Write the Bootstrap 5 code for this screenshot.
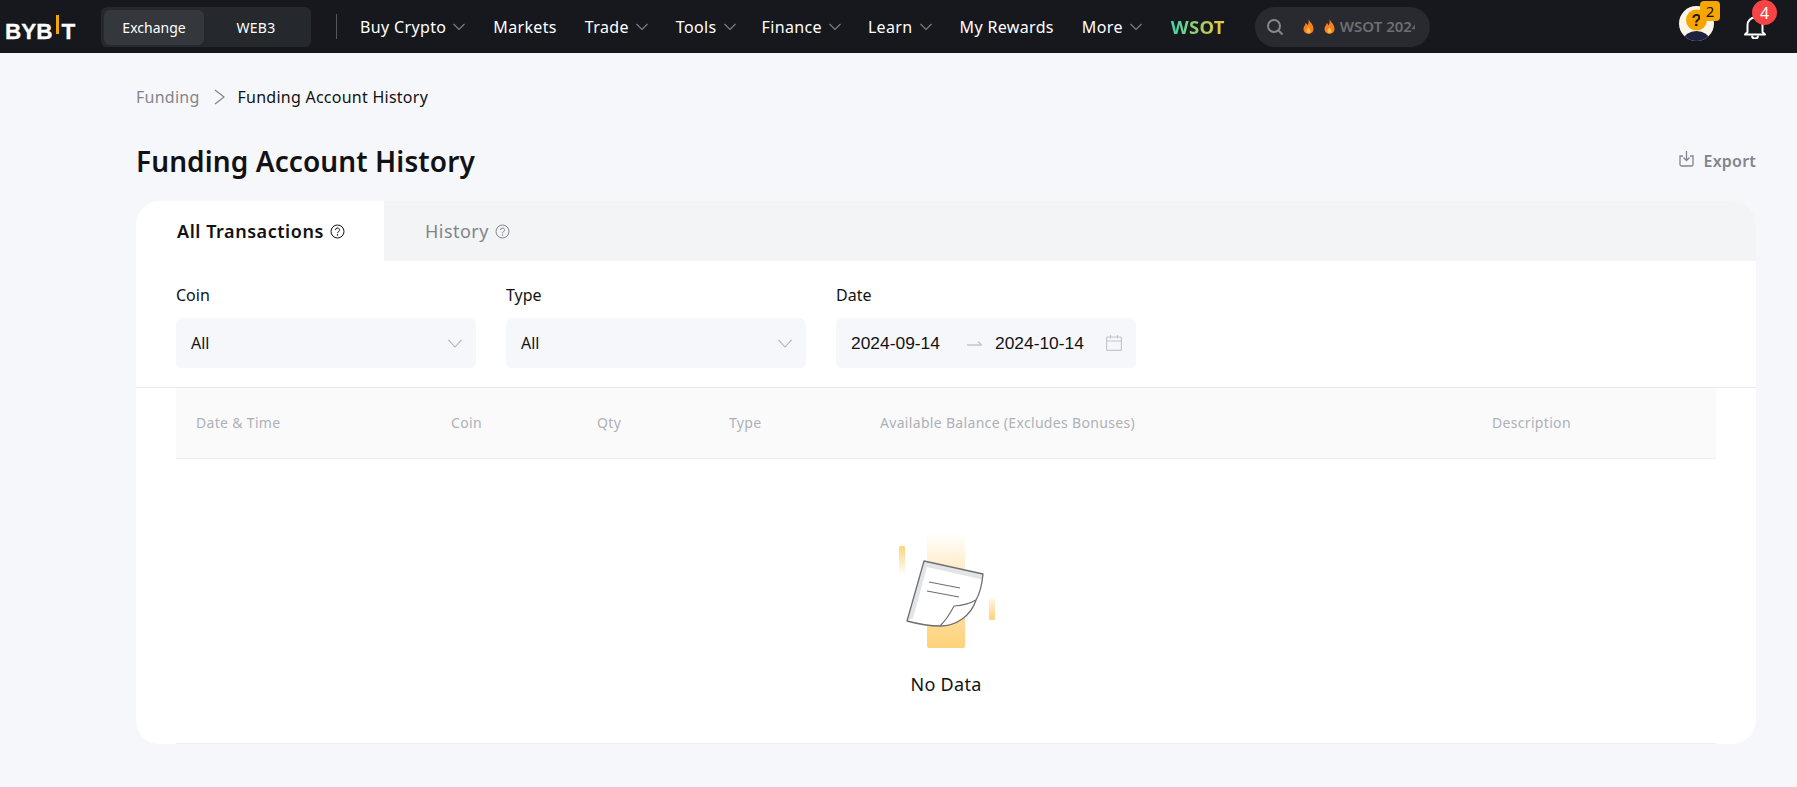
<!doctype html>
<html lang="en">
<head>
<meta charset="utf-8">
<title>Funding Account History</title>
<link href="https://cdn.jsdelivr.net/npm/bootstrap@5.3.0/dist/css/bootstrap.min.css" rel="stylesheet">
<style>
html,body{height:100%}
body{background:#f6f7fb;color:#121214;font-family:"Noto Sans",Roboto,sans-serif;overflow:hidden}
.topbar{height:53px;background:#16181e;color:#fff;padding:0 20px 0 5px}
.logo-txt{font-family:"Liberation Sans",sans-serif;font-weight:700;font-size:22.5px;width:72px;flex:none;line-height:24px;margin-top:6px;white-space:nowrap;-webkit-text-stroke:.3px #fff}
.logo-i{display:inline-block;width:3px;height:19px;background:#f7a600;margin:0 3px 5px 3px}
.switcher{width:210px;height:40px;margin-left:24px;background:#25282c;border-radius:6px;padding:3px;font-size:14px;flex:none}
.switcher>div{width:100px;height:35px;text-align:center;line-height:35px;border-radius:6px}
.switcher>.sw-on{background:#34373b}
.switcher>.sw-off{width:104px;letter-spacing:.3px}
.vline{width:1px;height:25px;background:#54565a;margin:0 23px 0 25px;flex:none}
.nav-it{font-size:16px;letter-spacing:.35px;color:#fff;margin-right:28px;white-space:nowrap;text-decoration:none;display:flex;align-items:center}
.nav-it.nav-tight{margin-right:26px}
.nav-it.nav-tight2{margin-right:27px}
.nav-it svg{margin-left:7px}
.wsot{font-weight:700;font-size:18.500px;background:linear-gradient(90deg,#3fd6a9,#f7c531);-webkit-background-clip:text;background-clip:text;color:transparent;margin-left:1px;letter-spacing:.3px}
.searchbox{width:175px;height:40px;border-radius:20px;background:#292a2f;margin-left:30px;padding-left:11px;flex:none;font-size:15px;font-weight:600;color:#6c6e72;overflow:hidden;white-space:nowrap}
.flame-a{margin-left:18px}.flame-b{margin-left:8px}
.search-words{width:75px;overflow:hidden;margin-left:4px}
.avatar-wrap{width:41px;height:35px;margin-left:auto;position:relative;flex:none;margin-bottom:6px}
.pip{position:absolute;display:flex;align-items:center;justify-content:center;font-size:15px;line-height:1}
.pip-orange{left:21px;top:-5px;width:20px;height:20px;background:#f7a600;color:#121214;border-radius:4px}
.bell-wrap{width:34px;height:24px;position:relative;flex:none;margin:0 0 3px 23px}
.pip-red{left:9px;top:-13px;width:25px;height:25px;background:#f84444;color:#fff;border-radius:50%;font-size:16px}
.main-area{padding:0 41px 0 136px}
.crumbs{height:36px;margin-top:26px;font-size:16px;letter-spacing:.25px;color:#81858c}
.crumbs .here{color:#121214}
.crumbs svg{margin:0 13px 0 14px}
.head-row{margin-top:19px;height:56px}
.page-title{font-size:28px;font-weight:600;margin:0;line-height:1.2;letter-spacing:.1px;color:#121214}
.export{font-size:16px;font-weight:600;letter-spacing:.2px;color:#81858c;margin-top:-2px}
.export svg{margin:-5px 10px 0 0}
.panel{margin-top:11px;height:543px;background:#fff;border-radius:24px;overflow:hidden}
.tabbar{height:60px;background:#f3f4f6}
.tab-on{width:248px;background:#fff;padding-left:41px;font-weight:600;font-size:18px;letter-spacing:.55px;color:#121214}
.tab-off{padding-left:41px;font-size:18px;letter-spacing:.45px;color:#81858c}
.tab-on svg,.tab-off svg{margin-left:6px}
.filters{padding:22px 40px 0 40px;gap:30px;height:127px;border-bottom:1px solid #e9eaee}
.fgroup{width:300px}
.flabel{font-size:16px;line-height:24px;margin-bottom:11px;color:#121214}
.fbox{height:50px;background:#f6f7fb;border-radius:6px;padding:0 14px 0 15px;font-size:16px}
.dates{font-family:"Liberation Sans",sans-serif;font-size:17.4px}
.date-arrow{margin:0 13px 0 27px}
.date-cal{margin-left:auto}
.tbl-wrap{padding:0 40px}
.grid-tbl{width:100%;table-layout:fixed;border-collapse:collapse}
.grid-tbl th{height:70px;background:#fafafa;font-size:14px;font-weight:400;letter-spacing:.32px;color:#adb1b8;border-bottom:1px solid #eeeff2;padding:0 0 0 20px;white-space:nowrap}
.grid-tbl .c1{width:255px}.grid-tbl .c2{width:146px}.grid-tbl .c3{width:132px}.grid-tbl .c4{width:151px}.grid-tbl .c5{width:612px}
.empty-cell{height:285px;border-bottom:1px solid #eeeff2;padding-top:28px;text-align:center}
.empty-txt{font-size:18px;letter-spacing:.3px;color:#121214;margin-top:24px;line-height:24px}
.empty-art{width:120px;height:116px;display:block;margin:0 auto}
</style>
</head>
<body>
<header class="topbar d-flex align-items-center">
  <div class="logo-txt">BYB<span class="logo-i"></span>T</div>
  <div class="switcher d-flex"><div class="sw-on">Exchange</div><div class="sw-off">WEB3</div></div>
  <div class="vline"></div>
  <a class="nav-it" href="#">Buy Crypto<svg width="12" height="8" viewBox="0 0 12 8" fill="none" stroke="#7d8085" stroke-width="1.1"><path d="M.5 1 6 6.500 11.500 1"/></svg></a>
  <a class="nav-it" href="#">Markets</a>
  <a class="nav-it" href="#">Trade<svg width="12" height="8" viewBox="0 0 12 8" fill="none" stroke="#7d8085" stroke-width="1.1"><path d="M.5 1 6 6.500 11.500 1"/></svg></a>
  <a class="nav-it nav-tight" href="#">Tools<svg width="12" height="8" viewBox="0 0 12 8" fill="none" stroke="#7d8085" stroke-width="1.1"><path d="M.5 1 6 6.500 11.500 1"/></svg></a>
  <a class="nav-it nav-tight2" href="#">Finance<svg width="12" height="8" viewBox="0 0 12 8" fill="none" stroke="#7d8085" stroke-width="1.1"><path d="M.5 1 6 6.500 11.500 1"/></svg></a>
  <a class="nav-it" href="#">Learn<svg width="12" height="8" viewBox="0 0 12 8" fill="none" stroke="#7d8085" stroke-width="1.1"><path d="M.5 1 6 6.500 11.500 1"/></svg></a>
  <a class="nav-it" href="#">My Rewards</a>
  <a class="nav-it" href="#">More<svg width="12" height="8" viewBox="0 0 12 8" fill="none" stroke="#7d8085" stroke-width="1.1"><path d="M.5 1 6 6.500 11.500 1"/></svg></a>
  <span class="wsot">WSOT</span>
  <div class="searchbox d-flex align-items-center">
    <svg width="18" height="18" viewBox="0 0 18 18" fill="none" stroke="#85878b" stroke-width="2"><circle cx="8" cy="8" r="6"/><path d="m12.500 12.500 4 4"/></svg>
    <svg class="flame-a" width="13" height="16" viewBox="0 0 12 16"><path d="M6 0c1 3 5 5 5 10a5 5 0 0 1-10 0C1 7 3 7 3 4c1 .5 2 1.500 2 2.500C6 5 6.500 2.500 6 0z" fill="#f7801e"/><path d="M6 8c.5 1.500 2 2.500 2 4a2 2 0 0 1-4 0c0-1.500 1.500-2.500 2-4z" fill="#fbc04a"/></svg>
    <svg class="flame-b" width="13" height="16" viewBox="0 0 12 16"><path d="M6 0c1 3 5 5 5 10a5 5 0 0 1-10 0C1 7 3 7 3 4c1 .5 2 1.500 2 2.500C6 5 6.500 2.500 6 0z" fill="#f7801e"/><path d="M6 8c.5 1.500 2 2.500 2 4a2 2 0 0 1-4 0c0-1.500 1.500-2.500 2-4z" fill="#fbc04a"/></svg>
    <div class="search-words">WSOT 2024</div>
  </div>
  <div class="avatar-wrap">
    <svg width="41" height="35" viewBox="0 0 41 35"><defs><clipPath id="avc"><ellipse cx="17.500" cy="17.500" rx="17.500" ry="17.500"/></clipPath></defs><g clip-path="url(#avc)"><rect width="35" height="35" fill="#fdf6e6"/><circle cx="17.500" cy="14" r="10.500" fill="#f7a600"/><ellipse cx="17.500" cy="34" rx="13" ry="9" fill="#1c2240"/></g><text x="17.500" y="20" font-size="16" font-weight="700" text-anchor="middle" fill="#1a1a1a" font-family="Liberation Sans">?</text></svg>
    <span class="pip pip-orange">2</span>
  </div>
  <div class="bell-wrap">
    <svg width="24" height="24" viewBox="0 0 24 24" fill="none" stroke="#fff" stroke-width="2" stroke-linejoin="round"><path d="M4.500 17V10a7.500 7.500 0 0 1 15 0v7l2.500 2.500H2z"/><path d="M9 20.500a3 3 0 0 0 6 0"/></svg>
    <span class="pip pip-red">4</span>
  </div>
</header>
<main class="main-area">
  <div class="crumbs d-flex align-items-center">Funding<svg width="11" height="16" viewBox="0 0 11 16" fill="none" stroke="#81858c" stroke-width="1.2"><path d="m1 1 9 7-9 7"/></svg><span class="here">Funding Account History</span></div>
  <div class="head-row d-flex justify-content-between align-items-center">
    <h1 class="page-title">Funding Account History</h1>
    <div class="export d-flex align-items-center"><svg width="15" height="17" viewBox="0 0 15 17" fill="none" stroke="#81858c" stroke-width="1.3"><path d="M4 6H1v8.500a1.500 1.500 0 0 0 1.500 1.500h10a1.500 1.500 0 0 0 1.500-1.500V6h-3"/><path d="M7.500 1v9M4.500 7.500l3 3 3-3"/></svg>Export</div>
  </div>
  <section class="panel">
    <div class="tabbar d-flex">
      <div class="tab-on d-flex align-items-center">All Transactions<svg width="15" height="15" viewBox="0 0 15 15" fill="none" stroke="#121214" stroke-width="1"><circle cx="7.500" cy="7.500" r="6.500"/><path d="M5.500 6a2 2 0 1 1 3 1.700c-.7.400-1 .8-1 1.500"/><circle cx="7.500" cy="11" r=".4"/></svg></div>
      <div class="tab-off d-flex align-items-center">History<svg width="15" height="15" viewBox="0 0 15 15" fill="none" stroke="#81858c" stroke-width="1"><circle cx="7.500" cy="7.500" r="6.500"/><path d="M5.500 6a2 2 0 1 1 3 1.700c-.7.400-1 .8-1 1.500"/><circle cx="7.500" cy="11" r=".4"/></svg></div>
    </div>
    <div class="filters d-flex">
      <div class="fgroup"><div class="flabel">Coin</div><div class="fbox d-flex align-items-center justify-content-between">All<svg width="14" height="9" viewBox="0 0 14 9" fill="none" stroke="#adb1b8" stroke-width="1.100"><path d="M.5.800 7 8 13.500.800"/></svg></div></div>
      <div class="fgroup"><div class="flabel">Type</div><div class="fbox d-flex align-items-center justify-content-between">All<svg width="14" height="9" viewBox="0 0 14 9" fill="none" stroke="#adb1b8" stroke-width="1.100"><path d="M.5.800 7 8 13.500.800"/></svg></div></div>
      <div class="fgroup"><div class="flabel">Date</div><div class="fbox dates d-flex align-items-center"><span>2024-09-14</span><svg class="date-arrow" width="15" height="6" viewBox="0 0 15 6" fill="none" stroke="#c4c6cb" stroke-width="1.300"><path d="M0 5h14.500L11 1.500"/></svg><span>2024-10-14</span><svg class="date-cal" width="16" height="16" viewBox="0 0 16 16" fill="none" stroke="#c4c6cb" stroke-width="1.200"><rect x=".6" y="2" width="14.800" height="13.400" rx="1"/><path d="M.6 6h14.800M4.500 0v3.500M11.500 0v3.500"/></svg></div></div>
    </div>
    <div class="tbl-wrap">
      <table class="grid-tbl">
        <thead><tr><th class="c1">Date &amp; Time</th><th class="c2">Coin</th><th class="c3">Qty</th><th class="c4">Type</th><th class="c5">Available Balance (Excludes Bonuses)</th><th>Description</th></tr></thead>
        <tbody><tr><td colspan="6" class="empty-cell">
          <svg class="empty-art" viewBox="-15 0 120 116" fill="none">
            <defs>
              <linearGradient id="gbar" x1="0" y1="0" x2="0" y2="1"><stop offset="0" stop-color="#fdd27a" stop-opacity="0"/><stop offset=".3" stop-color="#fdd27a" stop-opacity=".4"/><stop offset="1" stop-color="#fdd27a"/></linearGradient>
              <linearGradient id="gdown" x1="0" y1="0" x2="0" y2="1"><stop offset="0" stop-color="#fdd27a"/><stop offset="1" stop-color="#fdd27a" stop-opacity="0"/></linearGradient>
            </defs>
            <rect x="26" y="1" width="38" height="115" rx="2" fill="url(#gbar)"/>
            <rect x="-2" y="14" width="6" height="29" rx="1.500" fill="url(#gdown)"/>
            <rect x="88" y="64" width="6" height="24" rx="1.500" fill="url(#gbar)"/>
            <path d="M23 29 82 42c-1 11-3 19-7 26-5 16-20 26-36 26-12 0-22-2-33-5z" fill="#fff"/>
            <path d="M23 29 82 42l-.6 5.500L26 35 12 86l-6 3z" fill="#e3e4e6"/>
            <path d="M23 29 82 42c-1 11-3 19-7 26-5 16-20 26-36 26-12 0-22-2-33-5z" stroke="#6e6f72" stroke-width="1.300" stroke-linejoin="round"/>
            <path d="M39 94c6-6 10-12 14-20 9-.5 16-2.500 22-6" stroke="#6e6f72" stroke-width="1.100"/>
            <path d="M28 50l31 6M26 59l32 6" stroke="#6e6f72" stroke-width="1.100"/>
          </svg>
          <div class="empty-txt">No Data</div>
        </td></tr></tbody>
      </table>
    </div>
  </section>
</main>
<script src="https://cdn.jsdelivr.net/npm/bootstrap@5.3.0/dist/js/bootstrap.bundle.min.js"></script>
</body>
</html>
